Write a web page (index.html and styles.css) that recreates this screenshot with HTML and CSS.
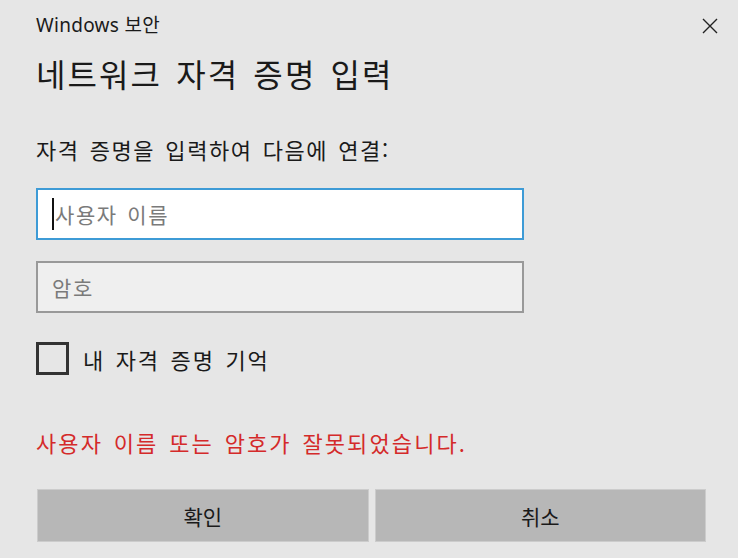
FILE: index.html
```html
<!DOCTYPE html>
<html lang="ko">
<head>
    <meta charset="UTF-8">
    <title>Windows 보안</title>
    <link rel="stylesheet" href="styles.css">
</head>
<body>
    <div class="dialog">
        <div class="titlebar">
            <span class="app-name">Windows 보안</span>
            <button class="close" aria-label="닫기">
                <svg width="16" height="16" viewBox="0 0 16 16">
                    <path d="M1 1 L15 15 M15 1 L1 15" stroke="#222" stroke-width="1.4" fill="none"/>
                </svg>
            </button>
        </div>
        <h1>네트워크 자격 증명 입력</h1>
        <p class="prompt">자격 증명을 입력하여 다음에 연결:</p>

        <div class="field focused"><span class="caret"></span><span class="placeholder">사용자 이름</span></div>
        <div class="field"><span class="placeholder">암호</span></div>

        <label class="remember">
            <span class="box"></span>
            <span>내 자격 증명 기억</span>
        </label>

        <p class="error">사용자 이름 또는 암호가 잘못되었습니다.</p>

        <div class="actions">
            <button class="btn">확인</button>
            <button class="btn">취소</button>
        </div>
    </div>
</body>
</html>
```

FILE: styles.css
```css
html, body {
    margin: 0;
    padding: 0;
    background-color: #e6e6e6;
}
body {
    font-family: "Noto Sans", "Noto Sans CJK KR", sans-serif;
    color: #1a1a1a;
}
.dialog {
    width: 738px;
    height: 558px;
    padding: 0 20px 0 36px;
    box-sizing: border-box;
}
.titlebar {
    display: flex;
    justify-content: space-between;
    align-items: center;
    height: 50px;
}
.app-name {
    font-size: 19px;
    letter-spacing: 0.3px;
    margin-top: -2px;
}
.close {
    border: none;
    background: none;
    padding: 0;
    width: 16px;
    height: 16px;
    margin-top: 2px;
    cursor: pointer;
}
h1 {
    margin: 0;
    font-family: "Noto Sans CJK KR", sans-serif;
    font-weight: normal;
    font-size: 32px;
    letter-spacing: 2.1px;
    word-spacing: 3px;
    line-height: 46px;
}
.prompt {
    margin: 39px 0 0;
    font-family: "Noto Sans CJK KR", sans-serif;
    font-size: 22px;
    letter-spacing: 1.55px;
    word-spacing: 2.5px;
    line-height: 28px;
}
.field {
    display: flex;
    align-items: center;
    width: 488px;
    height: 52px;
    box-sizing: border-box;
    border: 2px solid #999999;
    background-color: #efefef;
    padding-left: 14px;
    font-family: "Noto Sans CJK KR", sans-serif;
    font-size: 21px;
    letter-spacing: 1.6px;
    word-spacing: 2px;
    margin-top: 21px;
}
.field.focused {
    background-color: #ffffff;
    border-color: #3e9bd6;
    margin-top: 25px;
}
.placeholder {
    color: #7a7a7a;
}
.caret {
    width: 2px;
    height: 32px;
    margin-right: 1px;
    background-color: #111;
}
.remember {
    display: flex;
    align-items: center;
    gap: 14px;
    height: 33px;
    margin-top: 29px;
    font-family: "Noto Sans CJK KR", sans-serif;
    font-size: 22px;
    letter-spacing: 1.9px;
    word-spacing: 2.5px;
}
.box {
    width: 33px;
    height: 33px;
    box-sizing: border-box;
    border: 3px solid #333333;
}
.error {
    margin: 54px 0 0;
    font-family: "Noto Sans CJK KR", sans-serif;
    font-size: 22px;
    letter-spacing: 2.1px;
    word-spacing: 2.5px;
    color: #d42a2a;
    line-height: 26px;
}
.actions {
    display: grid;
    grid-template-columns: 1fr 1fr;
    gap: 6px;
    width: 669px;
    margin: 34px 0 0 1px;
}
.btn {
    height: 53px;
    background-color: #b7b7b7;
    border: 1px solid #cccccc;
    font-family: "Noto Sans CJK KR", sans-serif;
    font-size: 21px;
    color: #1a1a1a;
    cursor: pointer;
}
```
